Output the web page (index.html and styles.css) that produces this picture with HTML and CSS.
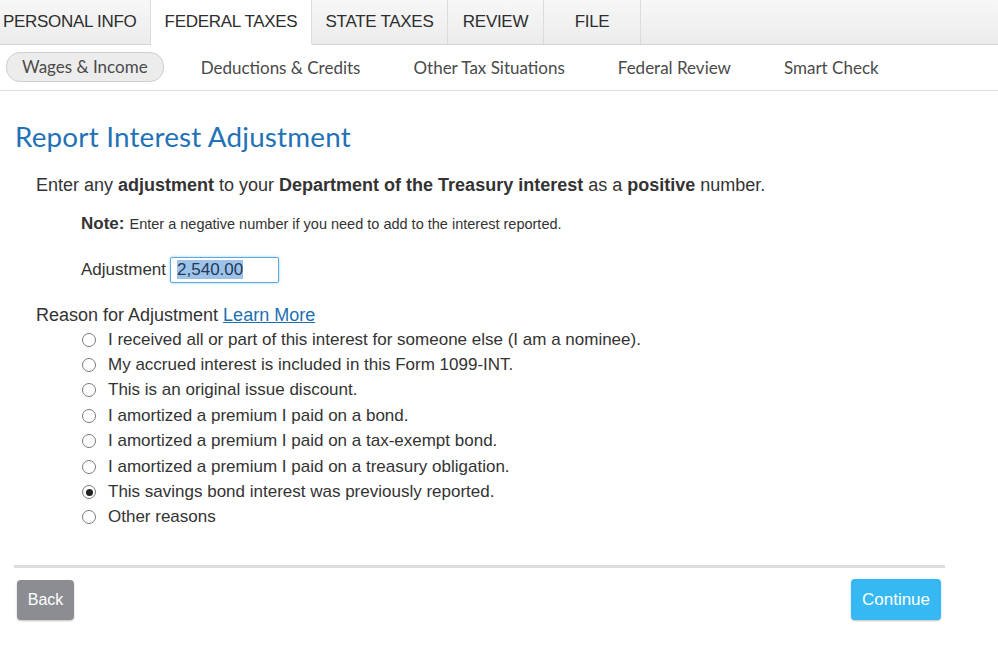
FILE: index.html
```html
<!DOCTYPE html>
<html lang="en">
<head>
    <meta charset="UTF-8">
    <title>Report Interest Adjustment</title>
    <link rel="stylesheet" href="styles.css">
</head>
<body>
    <div class="tabs">
        <div class="tab tab-first">PERSONAL INFO</div>
        <div class="tab tab-active">FEDERAL TAXES</div>
        <div class="tab tab-state">STATE TAXES</div>
        <div class="tab tab-review">REVIEW</div>
        <div class="tab tab-file">FILE</div>
        <div class="tab-rest"></div>
    </div>
    <div class="subnav">
        <span class="sub-item sub-active">Wages &amp; Income</span>
        <span class="sub-item">Deductions &amp; Credits</span>
        <span class="sub-item">Other Tax Situations</span>
        <span class="sub-item">Federal Review</span>
        <span class="sub-item">Smart Check</span>
    </div>

    <div class="content">
        <h1>Report Interest Adjustment</h1>
        <p class="intro">Enter any <b>adjustment</b> to your <b>Department of the Treasury interest</b> as a <b>positive</b> number.</p>
        <p class="note"><b>Note:</b> Enter a negative number if you need to add to the interest reported.</p>
        <div class="adj-row">
            <label>Adjustment</label>
            <div class="adj-input"><span class="sel">2,540.00</span></div>
        </div>
        <p class="reason">Reason for Adjustment <a href="#">Learn More</a></p>
        <ul class="options">
            <li><span class="radio"></span>I received all or part of this interest for someone else (I am a nominee).</li>
            <li><span class="radio"></span>My accrued interest is included in this Form 1099-INT.</li>
            <li><span class="radio"></span>This is an original issue discount.</li>
            <li><span class="radio"></span>I amortized a premium I paid on a bond.</li>
            <li><span class="radio"></span>I amortized a premium I paid on a tax-exempt bond.</li>
            <li><span class="radio"></span>I amortized a premium I paid on a treasury obligation.</li>
            <li><span class="radio checked"></span>This savings bond interest was previously reported.</li>
            <li><span class="radio"></span>Other reasons</li>
        </ul>
        <div class="divider"></div>
        <div class="actions">
            <button class="btn-back">Back</button>
            <button class="btn-continue">Continue</button>
        </div>
    </div>
</body>
</html>
```

FILE: styles.css
```css
*{
    margin: 0;
    padding: 0;
    box-sizing: border-box;
}
body{
    background: #fff;
    font-family: "Liberation Sans", Arial, sans-serif;
    color: #333;
    width: 998px;
    height: 667px;
    overflow: hidden;
}
.tabs{
    display: flex;
    height: 45px;
    background: linear-gradient(#f7f7f7, #ececec);
}
.tab{
    height: 45px;
    display: flex;
    align-items: center;
    justify-content: center;
    font-size: 17px;
    letter-spacing: -0.3px;
    color: #2d2d2d;
    border-right: 1px solid #dcdcdc;
    border-bottom: 1px solid #d4d4d4;
}
.tab-first{
    width: 151px;
    justify-content: flex-start;
    padding-left: 3px;
}
.tab-active{
    width: 161px;
    background: #fff;
    border-bottom-color: #fff;
}
.tab-state{ width: 136px; }
.tab-review{ width: 96px; }
.tab-file{ width: 97px; }
.tab-rest{
    flex: 1;
    border-bottom: 1px solid #d4d4d4;
}
.subnav{
    height: 46px;
    display: flex;
    align-items: center;
    padding-left: 6px;
    padding-bottom: 1px;
    border-bottom: 1px solid #dedede;
    font-family: Lato, "Noto Sans", sans-serif;
    font-size: 17px;
    color: #4a4a4a;
}
.sub-item{
    margin-right: 53px;
}
.sub-active{
    background: #ececec;
    border: 1px solid #cfcfcf;
    border-radius: 14px;
    padding: 3px 15px 4px 15px;
    margin-right: 37px;
}
.content{
    padding: 0 0 0 14px;
}
h1{
    font-family: Lato, "Noto Sans", sans-serif;
    font-weight: normal;
    font-size: 27.8px;
    color: #1f72b6;
    margin-top: 29px;
    padding-left: 1px;
    letter-spacing: 0.2px;
}
.intro{
    font-size: 18px;
    margin: 22px 0 0 22px;
}
.note{
    font-size: 14.5px;
    margin: 18px 0 0 67px;
}
.note b{
    font-size: 17px;
    margin-right: 1px;
}
.adj-row{
    display: flex;
    align-items: center;
    margin: 23px 0 0 67px;
    font-size: 17px;
}
.adj-row label{
    margin-right: 4px;
}
.adj-input{
    width: 109px;
    height: 26px;
    border: 1px solid #5ea8e0;
    box-shadow: 0 0 3px #9ccbf0;
    border-radius: 2px;
    padding: 2px 0 0 6px;
    font-size: 17px;
}
.sel{
    background: #9fc3e8;
    color: #1e3a5a;
}
.reason{
    font-size: 18px;
    margin: 22px 0 0 22px;
}
.reason a{
    color: #1e6fb0;
}
.options{
    list-style: none;
    margin: 1px 0 0 68px;
}
.options li{
    display: flex;
    align-items: center;
    height: 25.4px;
    font-size: 17px;
}
.radio{
    width: 14px;
    height: 14px;
    border: 1px solid #7a7a7a;
    border-radius: 50%;
    margin-right: 12px;
    display: flex;
    align-items: center;
    justify-content: center;
}
.radio.checked::after{
    content: "";
    width: 7px;
    height: 7px;
    border-radius: 50%;
    background: #222;
}
.divider{
    width: 931px;
    height: 3px;
    background: #dedede;
    margin-top: 35px;
}
.actions{
    width: 924px;
    display: flex;
    justify-content: space-between;
    margin-top: 11px;
    margin-left: 3px;
}
.actions button{
    border: none;
    border-radius: 4px;
    color: #fff;
    font-family: "Liberation Sans", Arial, sans-serif;
    box-shadow: 0 1px 2px rgba(0,0,0,0.25);
}
.btn-back{
    width: 57px;
    height: 40px;
    background: #8b8d93;
    font-size: 16px;
    margin-top: 1px;
}
.btn-continue{
    width: 90px;
    height: 41px;
    background: #36b8f3;
    font-size: 17px;
}
```
